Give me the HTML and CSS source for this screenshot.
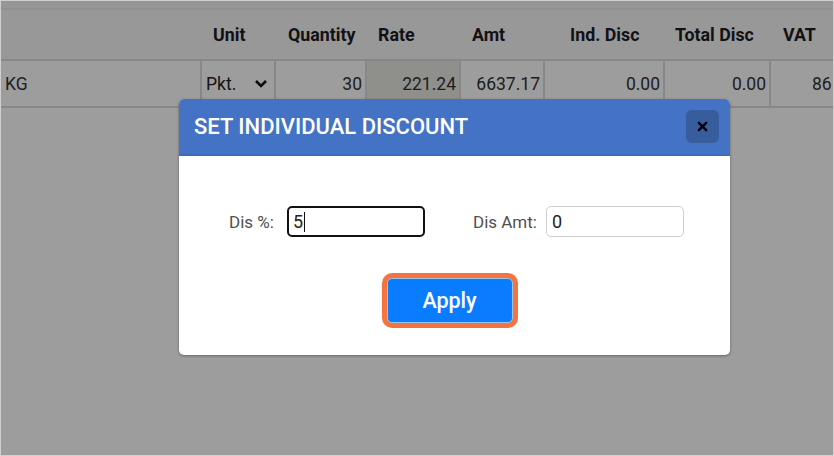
FILE: index.html
```html
<!DOCTYPE html>
<html>
<head>
<meta charset="utf-8">
<link rel="stylesheet" href="styles.css">
</head>
<body>
<div class="screen">
  <div class="topbar"></div>
  <div class="thead">
    <div class="th"></div>
    <div class="th">Unit</div>
    <div class="th">Quantity</div>
    <div class="th">Rate</div>
    <div class="th">Amt</div>
    <div class="th">Ind. Disc</div>
    <div class="th">Total Disc</div>
    <div class="th">VAT</div>
  </div>
  <div class="trow">
    <div class="td left">KG</div>
    <div class="td unit">Pkt. <svg class="chev" viewBox="0 0 14 10" width="14" height="10"><path d="M2 2 L7 7 L12 2" fill="none" stroke="#111" stroke-width="2.6"/></svg></div>
    <div class="td num">30</div>
    <div class="td num rate">221.24</div>
    <div class="td num">6637.17</div>
    <div class="td num">0.00</div>
    <div class="td num">0.00</div>
    <div class="td vat">86</div>
  </div>
  <div class="overlay"></div>
  <div class="modal">
    <div class="mhead">
      <div class="mtitle">SET INDIVIDUAL DISCOUNT</div>
      <button class="close"><svg viewBox="0 0 12 12" width="11" height="11"><path d="M2 2 L10 10 M10 2 L2 10" stroke="#000" stroke-width="2.6" stroke-linecap="round"/></svg></button>
    </div>
    <div class="mbody">
      <div class="fields">
        <label class="lbl">Dis %:</label>
        <div class="inp focus">5<span class="caret"></span></div>
        <label class="lbl lbl2">Dis Amt:</label>
        <div class="inp">0</div>
      </div>
      <div class="actions">
        <button class="apply">Apply</button>
      </div>
    </div>
  </div>
</div>
</body>
</html>
```

FILE: styles.css
```css
* { box-sizing: border-box; }
html, body { margin: 0; padding: 0; }
body { width: 834px; height: 456px; overflow: hidden; font-family: Roboto, "Liberation Sans", sans-serif; background: #fff; }
.screen { position: relative; width: 834px; height: 456px; border: 1px solid #d0d0d0; overflow: hidden; background: #fff; }
.topbar { height: 9px; border-bottom: 2px solid #ececec; background: #f4f4f4; }
.thead { display: grid; grid-template-columns: 212px 75px 90px 94px 98px 105px 108px 1fr; height: 51px; align-items: center; background: #f7f7f7; border-bottom: 2px solid #dcdcdc; padding-top: 0; }
.th { font-weight: 700; font-size: 17.8px; color: #1c1c24; white-space: nowrap; }
.trow { display: grid; grid-template-columns: 201px 74px 91px 94px 84px 120px 106px 1fr; height: 47px; border-bottom: 2px solid #dcdcdc; }
.td { display: flex; align-items: center; font-size: 17.5px; color: #333; border-right: 2px solid #dcdcdc; padding: 0 6px; white-space: nowrap; overflow: hidden; }
.td.left { padding-left: 4px; }
.td.num { justify-content: flex-end; padding-right: 3px; }
.td.rate { background: #e8e8e4; }
.td.vat { border-right: none; padding: 0 0 0 41px; justify-content: flex-start; overflow: visible; }
.td.unit { padding-left: 4px; justify-content: space-between; padding-right: 6px; color: #222; }
.chev { margin-top: 1px; }
.overlay { position: absolute; inset: 0; background: rgba(0,0,0,0.385); }
.modal { position: absolute; left: 178px; top: 98px; width: 551px; height: 256px; background: #fff; border-radius: 5px; overflow: hidden; box-shadow: 0 1px 3px rgba(0,0,0,0.35); }
.mhead { height: 57px; background: #4472c4; border-bottom: 2px solid #3d6bbe; display: flex; align-items: center; justify-content: space-between; padding: 0 11px 0 15px; }
.mtitle { color: #fff; font-weight: 500; font-size: 22px; letter-spacing: 0; }
.close { width: 33px; height: 33px; border: none; border-radius: 6px; background: #385d9d; display: flex; align-items: center; justify-content: center; padding: 0; }
.mbody { padding: 50px 0 0; }
.fields { display: flex; align-items: center; padding-left: 50px; height: 31px; }
.lbl { font-size: 17px; color: #505050; width: 58px; }
.lbl2 { width: 73px; margin-left: 48px; }
.inp { width: 138px; height: 31px; border: 1px solid #cfcfcf; border-radius: 5px; font-size: 18px; color: #222; padding: 0 5px; display: flex; align-items: center; }
.inp.focus { border: 2px solid #111; padding-left: 4px; }
.caret { display: inline-block; width: 1px; height: 20px; background: #111; margin-left: 1px; }
.actions { display: flex; justify-content: center; padding-top: 41px; }
.apply { margin-left: -10px; width: 126px; height: 45px; border: 1px solid #9ac4e8; border-radius: 5px; background: #0a7cff; color: #fff; font-family: Roboto, "Liberation Sans", sans-serif; font-size: 21.5px; font-weight: 500; box-shadow: 0 0 0 5px #f5733f; }
```
